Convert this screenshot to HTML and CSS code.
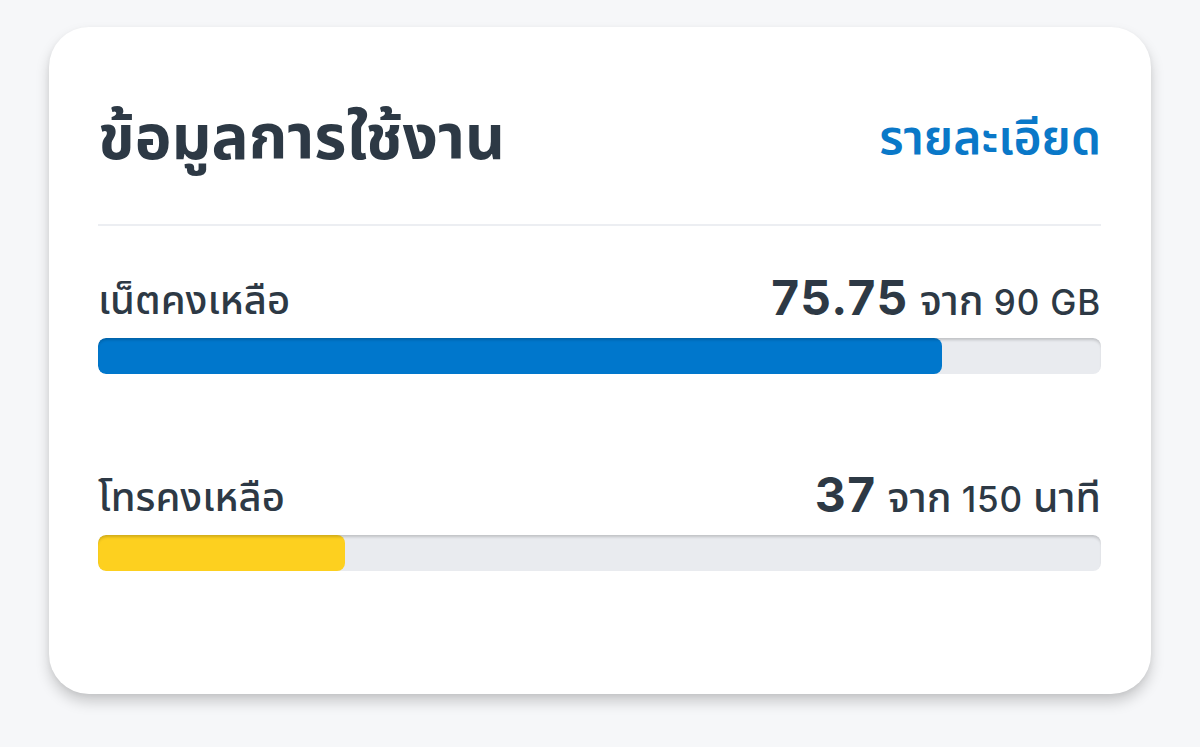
FILE: index.html
```html
<!DOCTYPE html>
<html lang="th">
<head>
<meta charset="utf-8">
<title>ข้อมูลการใช้งาน</title>
<link rel="stylesheet" href="styles.css">
</head>
<body>
<section class="card">
  <header class="card-head">
    <h1 class="title">ข้อมูลการใช้งาน</h1>
    <a class="link" href="#">รายละเอียด</a>
  </header>
  <div class="divider"></div>
  <div class="usage">
    <div class="usage-line">
      <span class="usage-label">เน็ตคงเหลือ</span>
      <span class="usage-value"><b class="num">75.75</b><span class="of"><span class="th">จาก</span> 90 GB</span></span>
    </div>
    <div class="track"><div class="fill fill-blue" style="width:84.17%"></div></div>
  </div>
  <div class="usage usage-second">
    <div class="usage-line">
      <span class="usage-label">โทรคงเหลือ</span>
      <span class="usage-value"><b class="num">37</b><span class="of"><span class="th">จาก</span> 150 <span class="th">นาที</span></span></span>
    </div>
    <div class="track"><div class="fill fill-yellow" style="width:24.67%"></div></div>
  </div>
</section>
</body>
</html>
```
FILE: styles.css
```css
html, body {
  margin: 0;
  padding: 0;
}
html {
  background: #f6f7f9;
}
body {
  min-height: 100vh;
  box-sizing: border-box;
  font-family: "Inter", "Noto Sans Thai", "Noto Sans Thai UI", "Noto Sans", "DejaVu Sans", sans-serif;
  color: #2d3945;
  padding: 27px 49px 53px;
}
.card {
  background: #fff;
  border-radius: 40px;
  height: 667px;
  box-sizing: border-box;
  padding: 50px 50px 0 49px;
  box-shadow: 0 8px 14px rgba(0, 0, 0, 0.18), 0 2px 5px rgba(0, 0, 0, 0.05);
}
.card-head {
  height: 120px;
  display: flex;
  align-items: center;
  justify-content: space-between;
  margin-bottom: 27px;
}
.title {
  margin: 0;
  font-size: 62px;
  font-weight: 700;
  line-height: 70px;
  color: #2d3945;
}
.link {
  font-size: 48px;
  font-weight: 600;
  color: #0a78c8;
  text-decoration: none;
  line-height: 60px;
}
.divider {
  height: 2px;
  background: #eceef2;
}
.usage {
  margin-top: 50px;
}
.usage-second {
  margin-top: 99px;
}
.usage-line {
  height: 48px;
  display: flex;
  align-items: center;
  justify-content: space-between;
  margin-bottom: 14px;
}
.usage-label {
  font-size: 40px;
  font-weight: 500;
  line-height: 48px;
}
.usage-value {
  display: flex;
  align-items: baseline;
  gap: 11px;
  line-height: 48px;
}
.num {
  font-size: 48px;
  font-weight: 700;
  letter-spacing: 1.5px;
}
.of {
  font-size: 35px;
  font-weight: 500;
  letter-spacing: 0.8px;
}
.th {
  font-size: 41px;
  letter-spacing: 0;
}
.track {
  position: relative;
  height: 36px;
  border-radius: 8px;
  background: #e9ebef;
  overflow: hidden;
}
.track::after {
  content: "";
  position: absolute;
  inset: 0;
  border-radius: 8px;
  box-shadow: inset 0 3px 3px -1px rgba(0, 0, 0, 0.18);
  pointer-events: none;
}
.fill {
  height: 100%;
  border-radius: 8px;
}
.fill-blue {
  background: #0077cc;
}
.fill-yellow {
  background: #fdd01f;
}
```
